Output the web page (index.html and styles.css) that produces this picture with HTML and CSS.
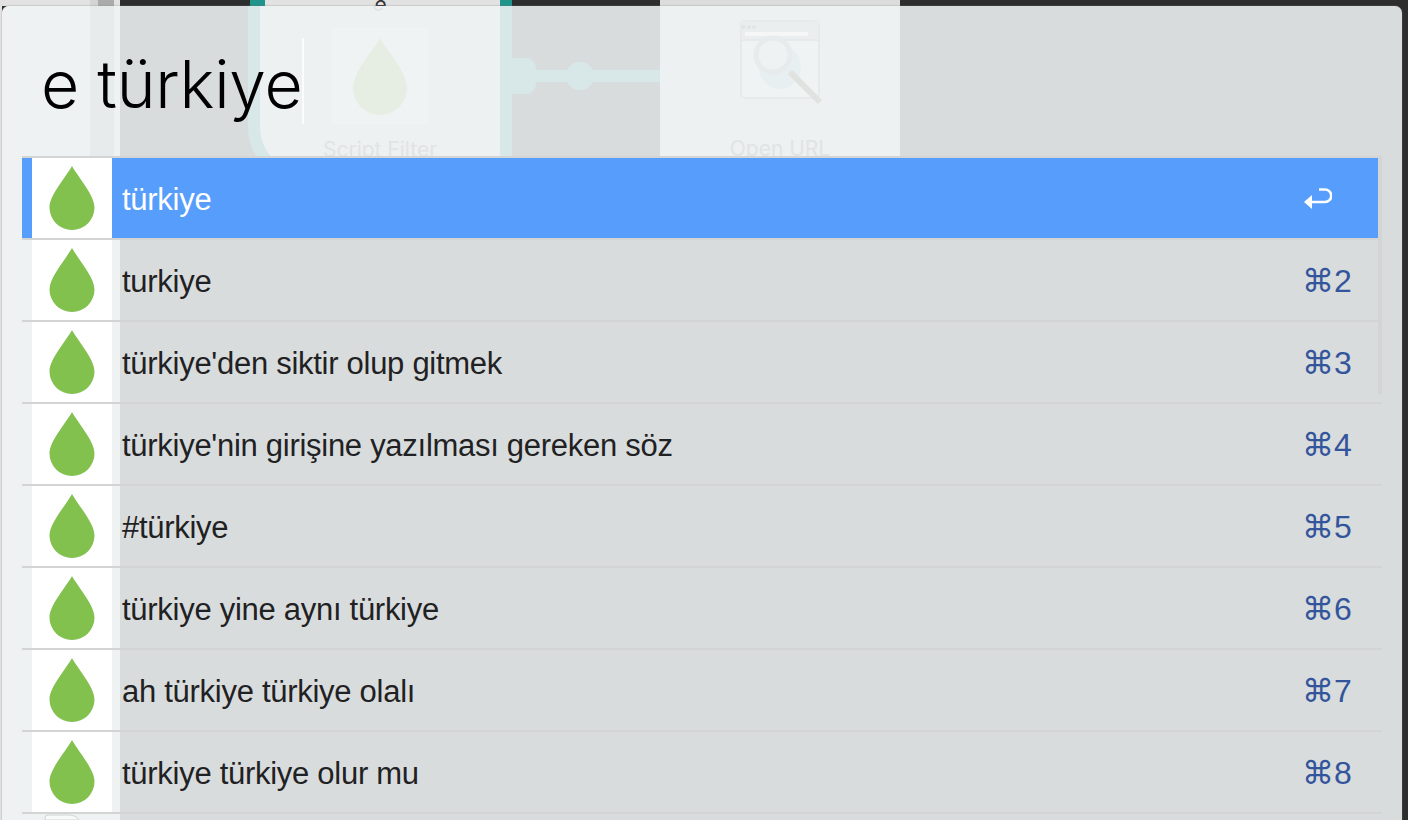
FILE: index.html
```html
<!DOCTYPE html>
<html lang="tr">
<head>
<meta charset="utf-8">
<title>Alfred</title>
<link rel="stylesheet" href="styles.css">
</head>
<body>
<div class="desk">
  <div class="strip s-a"></div><div class="strip s-b"></div><div class="strip s-c"></div><div class="strip s-d"></div>
  <div class="strip s-e"></div><div class="strip s-f"></div><div class="strip s-g"><span class="cut-e">e</span></div><div class="strip s-h"></div>
  <div class="strip s-i"></div><div class="strip s-j"></div>
</div>
<main class="window">
  <div class="backdrop">
    <div class="sidebar"></div>
    <div class="sidebar-band"></div>
    <div class="node-ring"></div>
    <div class="node script-node">
      <span class="faded-e">e</span>
      <div class="node-icon">
        <svg width="56" height="80" viewBox="0 0 56 80"><path class="pale" d="M28 1C22 13 1 34 1 51a27 27 0 0 0 54 0C55 34 34 13 28 1Z"/></svg>
      </div>
      <div class="node-label">Script Filter</div>
    </div>
    <div class="port"></div>
    <div class="wire"></div>
    <div class="knob"></div>
    <div class="node url-node">
      <svg class="url-icon" width="88" height="88" viewBox="0 0 88 88">
        <rect x="1" y="1" width="78" height="77" rx="4" fill="#f0f3f3" stroke="#e7eaea" stroke-width="2"/>
        <path d="M1 20H79" stroke="#e7eaea" stroke-width="2"/>
        <path d="M2 2H78V19H2Z" fill="#ebeeee"/>
        <circle cx="3.500" cy="7" r="2" fill="#e1e4e4"/><circle cx="9" cy="7" r="2" fill="#e1e4e4"/><circle cx="14" cy="7" r="2" fill="#e1e4e4"/>
        <rect x="5" y="12" width="63" height="4" fill="#f5f7f7"/>
        <ellipse cx="40" cy="47" rx="21" ry="22" fill="#e7eff0"/>
        <circle cx="33" cy="35" r="17" fill="#eff2f2" stroke="#e8ebeb" stroke-width="5"/>
        <path d="M50 52L80 82" stroke="#dfe2de" stroke-width="6"/>
      </svg>
      <div class="node-label url-label">Open URL</div>
    </div>
  </div>
  <header class="query"><span class="query-text">e türkiye</span><span class="caret"></span></header>
  <ul class="results">
    <li class="row selected"><span class="icon"><svg class="drop" viewBox="0 0 48 66"><path d="M24 1C18 12 1.500 30 1.500 42.500a22.500 22.500 0 0 0 45 0C46.500 30 30 12 24 1Z"/></svg></span><span class="title">türkiye</span><svg class="enter" width="28" height="23" viewBox="0 0 28 23"><path d="M15 2.500H21A6.250 6.250 0 0 1 21 15H6" fill="none" stroke="#fff" stroke-width="2.600"/><path d="M0 15L8 8V22Z" fill="#fff"/></svg></li>
    <li class="row"><span class="icon"><svg class="drop" viewBox="0 0 48 66"><path d="M24 1C18 12 1.500 30 1.500 42.500a22.500 22.500 0 0 0 45 0C46.500 30 30 12 24 1Z"/></svg></span><span class="title">turkiye</span><span class="key">⌘2</span></li>
    <li class="row"><span class="icon"><svg class="drop" viewBox="0 0 48 66"><path d="M24 1C18 12 1.500 30 1.500 42.500a22.500 22.500 0 0 0 45 0C46.500 30 30 12 24 1Z"/></svg></span><span class="title">türkiye'den siktir olup gitmek</span><span class="key">⌘3</span></li>
    <li class="row"><span class="icon"><svg class="drop" viewBox="0 0 48 66"><path d="M24 1C18 12 1.500 30 1.500 42.500a22.500 22.500 0 0 0 45 0C46.500 30 30 12 24 1Z"/></svg></span><span class="title">türkiye'nin girişine yazılması gereken söz</span><span class="key">⌘4</span></li>
    <li class="row"><span class="icon"><svg class="drop" viewBox="0 0 48 66"><path d="M24 1C18 12 1.500 30 1.500 42.500a22.500 22.500 0 0 0 45 0C46.500 30 30 12 24 1Z"/></svg></span><span class="title">#türkiye</span><span class="key">⌘5</span></li>
    <li class="row"><span class="icon"><svg class="drop" viewBox="0 0 48 66"><path d="M24 1C18 12 1.500 30 1.500 42.500a22.500 22.500 0 0 0 45 0C46.500 30 30 12 24 1Z"/></svg></span><span class="title">türkiye yine aynı türkiye</span><span class="key">⌘6</span></li>
    <li class="row"><span class="icon"><svg class="drop" viewBox="0 0 48 66"><path d="M24 1C18 12 1.500 30 1.500 42.500a22.500 22.500 0 0 0 45 0C46.500 30 30 12 24 1Z"/></svg></span><span class="title">ah türkiye türkiye olalı</span><span class="key">⌘7</span></li>
    <li class="row"><span class="icon"><svg class="drop" viewBox="0 0 48 66"><path d="M24 1C18 12 1.500 30 1.500 42.500a22.500 22.500 0 0 0 45 0C46.500 30 30 12 24 1Z"/></svg></span><span class="title">türkiye türkiye olur mu</span><span class="key">⌘8</span></li>
  </ul>
  <div class="scrollbar"></div>
  <svg class="peek" width="40" height="6" viewBox="0 0 40 6"><path d="M1 6V4Q1 1 4 1H24Q32 1 35 6Z" fill="#f8f9f9" stroke="#d2d4d4"/></svg>
</main>
</body>
</html>
```
FILE: styles.css
```css
* { box-sizing: border-box; }
html, body { margin: 0; height: 820px; overflow: hidden; }
body { position: relative; background: linear-gradient(90deg, #e4e4e4 2px, #2d2d2d 2px); font-family: "Liberation Sans", Arial, sans-serif; }

.desk { display: flex; height: 6px; }
.strip { height: 6px; flex: none; }
.s-a { width: 90px; background: #e2e2e2; }
.s-b { width: 8px; background: #d4d4d4; }
.s-c { width: 16px; background: #ababab; }
.s-d { width: 6px; background: #e2e2e2; }
.s-e { width: 130px; background: #2d2d2d; }
.s-f { width: 15px; background: #1f948b; }
.s-g { width: 235px; background: #e2e2e2; overflow: hidden; display: flex; justify-content: center; }
.s-h { width: 12px; background: #1f948b; }
.s-i { width: 148px; background: #2d2d2d; }
.s-j { width: 240px; background: #dcdcdc; }
.cut-e { font-family: "Inter", sans-serif; font-size: 21px; line-height: 10px; height: 6px; margin-right: 4px; color: #333; }

.window { position: absolute; left: 2px; top: 6px; width: 1400px; height: 814px; overflow: hidden; background: #d9dcdd; border-radius: 7px 7px 0 0; box-shadow: 0 0 1.500px #777; }

.backdrop { position: absolute; inset: 0; }
.sidebar { position: absolute; left: 0; top: 0; width: 118px; height: 814px; background: #eff2f3; }
.sidebar-band { position: absolute; left: 88px; top: 0; width: 24px; height: 150px; background: #e8ebec; }
.node-ring { position: absolute; left: 246px; top: -70px; width: 264px; height: 250px; border: 12px solid #d8e7e7; border-radius: 60px 0 0 60px; background: #edf1f2; }
.node { position: absolute; top: 0; height: 170px; background: #edf1f2; display: flex; flex-direction: column; align-items: center; }
.script-node { left: 258px; width: 240px; background: transparent; }
.url-node { left: 658px; width: 240px; border-radius: 0 0 12px 12px; }
.faded-e { position: absolute; top: -8px; left: 112px; font-family: "Inter", sans-serif; font-size: 21px; line-height: 12px; color: #e1e4e4; }
.node-icon { margin-top: 22px; width: 96px; height: 96px; background: #f0f3f4; display: flex; align-items: flex-start; justify-content: center; padding-top: 9px; flex: none; }
.pale { fill: #e6eee3; }
.node-label { margin-top: 13px; font-family: "Inter", sans-serif; font-size: 21px; color: #e1e4e4; line-height: 26px; white-space: nowrap; }
.url-icon { margin-top: 14px; margin-left: 7px; flex: none; filter: blur(.5px); }
.url-label { margin-top: 28px; }
.port { position: absolute; left: 510px; top: 52px; width: 24px; height: 36px; background: #d8e7e7; border-radius: 0 10px 10px 0; }
.wire { position: absolute; left: 530px; top: 64px; width: 128px; height: 12px; background: #d8e7e7; }
.knob { position: absolute; left: 564px; top: 56px; width: 28px; height: 28px; border-radius: 50%; background: #d8e7e7; }

.query { position: relative; height: 150px; padding: 38px 0 0 39px; display: flex; align-items: flex-start; }
.query-text { font-family: "Inter", sans-serif; font-weight: 300; font-size: 66px; line-height: 80px; color: #000; letter-spacing: -.25px; }
.caret { width: 2px; height: 86px; margin-top: -6px; background: #fbfcfc; }

.results { position: relative; list-style: none; margin: 0 0 0 20px; padding: 0; width: 1360px; border-top: 2px solid #d3d5d5; }
.row { display: flex; align-items: center; height: 82px; padding-left: 10px; border-bottom: 2px solid #d3d5d5; }
.row.selected { width: 1356px; background: rgba(84, 155, 252, .98); }
.icon { width: 80px; height: 80px; background: #fff; display: flex; align-items: center; justify-content: center; flex: none; }
.drop { width: 48px; height: 66px; }
.drop path { fill: #82c14e; }
.title { margin-left: 10px; padding-top: 4px; flex: 1; font-size: 31px; letter-spacing: -.28px; color: #1f2123; white-space: nowrap; }
.selected .title { color: #fff; }
.key { width: 80px; padding-top: 2px; font-size: 32px; color: #33559b; white-space: nowrap; font-family: "Liberation Sans", "DejaVu Sans", sans-serif; }
.enter { margin-right: 46px; }

.scrollbar { position: absolute; left: 1376px; top: 150px; width: 4px; height: 238px; background: #d3d5d5; }
.peek { position: absolute; left: 42px; bottom: 0; }
```
